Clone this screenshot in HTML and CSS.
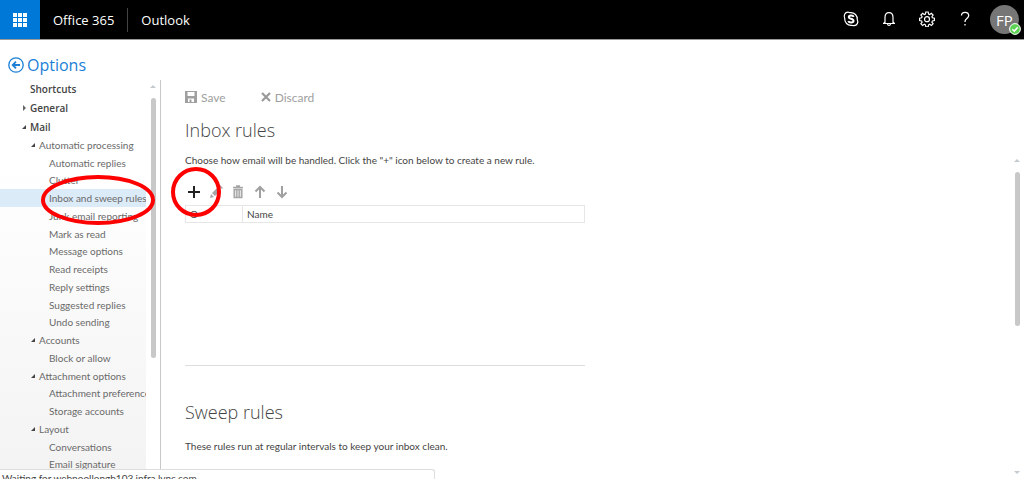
FILE: index.html
```html
<!DOCTYPE html>
<html lang="en">
<head>
    <meta charset="UTF-8">
    <meta name="viewport" content="width=device-width, initial-scale=1.0">
    <title>Outlook - Options</title>
    <link rel="stylesheet" href="styles.css">
</head>
<body>
    <header class="topbar">
        <button class="launcher" aria-label="App launcher">
            <svg width="14" height="14" viewBox="0 0 14 14" fill="#fff">
                <path d="M0 0h4v4H0zM5 0h4v4H5zM10 0h4v4h-4zM0 5h4v4H0zM5 5h4v4H5zM10 5h4v4h-4zM0 10h4v4H0zM5 10h4v4H5zM10 10h4v4h-4z"/>
            </svg>
        </button>
        <a class="brand" href="#">Office 365</a>
        <a class="app" href="#">Outlook</a>
        <nav class="tools">
            <button class="tool" aria-label="Skype">
                <svg width="16" height="16" viewBox="0 0 16 16" fill="none" stroke="#fff">
                    <path stroke-width="1.2" d="M5 1.2C6 1.2 6.500 1.700 7.200 1.700C11.500 1.300 14.600 4.600 14.300 8.700C15.600 11.200 14.200 14.700 11 14.700C10 14.700 9.500 14.300 8.700 14.300C4.500 14.700 1.400 11.400 1.700 7.300C.4 4.800 1.800 1.200 5 1.200z"/>
                    <path stroke-width="2" d="M10.700 5.800C10 4.100 5.800 4.100 5.800 6.200C5.800 8.200 10.500 7.300 10.500 9.700C10.500 12.100 6 12 5.300 10"/>
                </svg>
            </button>
            <button class="tool" aria-label="Notifications">
                <svg width="16" height="16" viewBox="0 0 16 16" fill="none" stroke="#fff" stroke-width="1.200">
                    <path d="M2 12.500h12M4 12V6.500C4 3.500 5.600 1.600 8 1.600s4 1.900 4 4.900V12M2.600 12.400L4 10.800M13.400 12.400L12 10.800"/>
                    <path d="M6.500 13c.3 1.800 2.700 1.800 3 0"/>
                </svg>
            </button>
            <button class="tool" aria-label="Settings">
                <svg width="16" height="16" viewBox="0 0 16 16" fill="none" stroke="#fff" stroke-width="1.200">
                    <path d="M6.800 1h2.400l.4 2 1.100.5 1.700-1.200 1.700 1.700-1.200 1.700.5 1.100 2 .4v2.400l-2 .4-.5 1.100 1.200 1.700-1.700 1.700-1.700-1.200-1.100.5-.4 2H6.800l-.4-2-1.100-.5-1.700 1.200L1.900 12.800l1.200-1.700-.5-1.100-2-.4V7.200l2-.4.5-1.100L1.900 4l1.700-1.700 1.700 1.200L6.400 3z"/>
                    <circle cx="8" cy="8.200" r="2.500"/>
                </svg>
            </button>
            <button class="tool" aria-label="Help">
                <svg width="16" height="16" viewBox="0 0 16 16" fill="none" stroke="#fff" stroke-width="1.300">
                    <path d="M4.500 4.500C4.500 .2 11.700 .2 11.700 4.500C11.700 7.500 8 7.500 8 10.500V11"/>
                    <path d="M8 13v1.600"/>
                </svg>
            </button>
            <button class="avatar">FP
                <svg class="presence" width="12" height="12" viewBox="0 0 12 12">
                    <circle cx="6" cy="6" r="5.400" fill="#5dd255" stroke="#fff"/>
                    <path d="M3.300 6.200l2 1.900 3.500-3.800" fill="none" stroke="#fff" stroke-width="1.500"/>
                </svg>
            </button>
        </nav>
    </header>

    <a class="options" href="#">
        <svg width="16" height="16" viewBox="0 0 16 16" fill="none" stroke="#1b7fd6">
            <circle cx="8" cy="8" r="7.200" stroke-width="1.300"/>
            <path stroke-width="1.800" d="M12 8H5M8 4.700L4.700 8L8 11.300"/>
        </svg>
        Options
    </a>

    <div class="page">
        <aside class="sidebar">
            <ul class="tree">
                <li class="top"><a href="#">Shortcuts</a></li>
                <li class="top closed"><a href="#">General</a></li>
                <li class="top open"><a href="#">Mail</a></li>
                <li class="group open"><a href="#">Automatic processing</a></li>
                <li><a href="#">Automatic replies</a></li>
                <li><a href="#">Clutter</a></li>
                <li class="selected"><a href="#">Inbox and sweep rules</a></li>
                <li><a href="#">Junk email reporting</a></li>
                <li><a href="#">Mark as read</a></li>
                <li><a href="#">Message options</a></li>
                <li><a href="#">Read receipts</a></li>
                <li><a href="#">Reply settings</a></li>
                <li><a href="#">Suggested replies</a></li>
                <li><a href="#">Undo sending</a></li>
                <li class="group open"><a href="#">Accounts</a></li>
                <li><a href="#">Block or allow</a></li>
                <li class="group open"><a href="#">Attachment options</a></li>
                <li><a href="#">Attachment preference</a></li>
                <li><a href="#">Storage accounts</a></li>
                <li class="group open"><a href="#">Layout</a></li>
                <li><a href="#">Conversations</a></li>
                <li><a href="#">Email signature</a></li>
            </ul>
            <div class="scroll">
                <span class="arrow-up"></span>
                <span class="thumb"></span>
            </div>
            <svg class="mark mark-menu" viewBox="0 0 116 52" fill="none" stroke="#f00" stroke-width="4">
                <ellipse cx="58" cy="26" rx="55" ry="23"/>
            </svg>
        </aside>

        <main class="content">
            <div class="actions">
                <button class="action">
                    <svg width="12" height="12" viewBox="0 0 12 12" fill="#a0a0a0">
                        <path fill-rule="evenodd" d="M0 0h12v12H0zM2.500 1v4h7V1zM3 7.500V11h1.500V8.500h2V11H9V7.500z"/>
                    </svg>
                    Save
                </button>
                <button class="action">
                    <svg width="10" height="10" viewBox="0 0 10 10" fill="none" stroke="#999" stroke-width="2.200">
                        <path d="M1 1l8 8M9 1L1 9"/>
                    </svg>
                    Discard
                </button>
            </div>

            <section class="rules">
                <h1>Inbox rules</h1>
                <p>Choose how email will be handled. Click the "+" icon below to create a new rule.</p>
                <div class="rule-tools">
                    <button aria-label="New rule">
                        <svg width="14" height="14" viewBox="0 0 14 14" stroke="#222" stroke-width="2"><path d="M7 1v12M1 7h12"/></svg>
                    </button>
                    <button aria-label="Edit">
                        <svg width="14" height="14" viewBox="0 0 14 14" fill="#a6a6a6"><path d="M1 13l1-4 3 3zM3 8l6-6 3 3-6 6zM10 1l1-1 3 3-1 1z"/></svg>
                    </button>
                    <button aria-label="Delete">
                        <svg width="14" height="14" viewBox="0 0 14 14" fill="none" stroke="#a6a6a6">
                            <path stroke-width="1.500" d="M2 2.500h10M5 1h4M3.200 4.500h7.600v8H3.200z"/>
                            <path stroke-width="1.200" d="M5.300 5v7M7 5v7M8.700 5v7"/>
                        </svg>
                    </button>
                    <button aria-label="Move up">
                        <svg width="14" height="14" viewBox="0 0 14 14" fill="none" stroke="#a0a0a0" stroke-width="2"><path d="M7 13V2M2.500 6.500L7 2l4.500 4.500"/></svg>
                    </button>
                    <button aria-label="Move down">
                        <svg width="14" height="14" viewBox="0 0 14 14" fill="none" stroke="#a0a0a0" stroke-width="2"><path d="M7 1v11M2.500 7.500L7 12l4.500-4.500"/></svg>
                    </button>
                    <svg class="mark mark-add" viewBox="0 0 52 52" fill="none" stroke="#f00" stroke-width="4">
                        <circle cx="26" cy="26" r="23"/>
                    </svg>
                </div>
                <table class="rule-list">
                    <thead>
                        <tr><th class="col-on">O</th><th>Name</th></tr>
                    </thead>
                </table>
            </section>

            <section class="sweep">
                <h1>Sweep rules</h1>
                <p>These rules run at regular intervals to keep your inbox clean.</p>
            </section>
        </main>

        <div class="scroll page-scroll">
            <span class="arrow-up"></span>
            <span class="thumb"></span>
            <span class="arrow-down"></span>
        </div>
    </div>

    <div class="status">Waiting for webpoollongb103.infra.lync.com</div>
</body>
</html>
```

FILE: styles.css
```css
* {
    box-sizing: border-box;
}
body {
    margin: 0;
    height: 100vh;
    display: flex;
    flex-direction: column;
    overflow: hidden;
    font-family: Lato, "Open Sans", sans-serif;
    font-size: 10px;
    color: #444;
    background-color: #fff;
}
a {
    color: inherit;
    text-decoration: none;
}
button {
    border: none;
    padding: 0;
    background: none;
    font-family: inherit;
    color: inherit;
}
svg {
    display: block;
}
h1, p, ul {
    margin: 0;
    padding: 0;
}
.topbar, .options, h1 {
    font-family: "Open Sans", sans-serif;
}

/* top bar */
.topbar {
    flex: none;
    display: flex;
    align-items: center;
    height: 40px;
    background-color: #000;
    border-bottom: 1px solid #999;
    color: #fff;
    font-size: 13px;
}
.launcher {
    display: flex;
    align-items: center;
    justify-content: center;
    width: 40px;
    height: 39px;
    background-color: #0078d7;
}
.brand {
    padding: 0 13px;
    line-height: 24px;
    border-right: 1px solid #444;
}
.app {
    padding-left: 13px;
}
.tools {
    display: flex;
    align-items: center;
    gap: 22px;
    margin-left: auto;
    padding-right: 5px;
}
.tool {
    padding-bottom: 2px;
}
.avatar {
    position: relative;
    width: 29px;
    height: 29px;
    margin-left: -5px;
    border-radius: 50%;
    background-color: #767676;
    color: #fff;
    font-size: 15px;
}
.presence {
    position: absolute;
    right: -2px;
    bottom: -1px;
}

.options {
    flex: none;
    display: flex;
    align-items: center;
    gap: 3px;
    height: 40px;
    padding: 10px 8px 0;
    font-size: 16px;
    color: #1b7fd6;
}

/* left menu */
.page {
    flex: 1;
    display: flex;
    min-height: 0;
}
.sidebar {
    position: relative;
    display: flex;
    width: 161px;
    border-right: 1px solid #c8c8c8;
}
.tree {
    display: flex;
    flex-direction: column;
    width: 146px;
    padding-bottom: 6px;
    list-style: none;
    overflow: hidden;
    white-space: nowrap;
    background: linear-gradient(#fff 20%, #f3f3f3);
}
.tree li {
    flex: 20;
    display: flex;
    align-items: center;
    min-height: 0;
    padding-left: 49px;
    line-height: 16px;
    color: #6a6a6a;
}
.tree .top {
    flex: 21;
    padding-left: 30px;
    font-family: "Open Sans", sans-serif;
    font-weight: 600;
    color: #444;
}
.tree .group {
    padding-left: 39px;
}
.tree .selected {
    background-color: #dcebf8;
}
.open::before {
    content: "";
    margin-left: -8px;
    margin-right: 4px;
    border-left: 4px solid transparent;
    border-bottom: 4px solid #444;
}
.closed::before {
    content: "";
    margin-left: -7px;
    margin-right: 4px;
    border-left: 3px solid #666;
    border-top: 3px solid transparent;
    border-bottom: 3px solid transparent;
}

/* scroll bars */
.scroll {
    display: flex;
    flex-direction: column;
    align-items: center;
    width: 14px;
    padding-top: 5px;
}
.arrow-up {
    border: 3px solid transparent;
    border-top: none;
    border-bottom: 3px solid #c3cbd0;
}
.arrow-down {
    margin-top: auto;
    border: 3px solid transparent;
    border-bottom: none;
    border-top: 3px solid #c3cbd0;
}
.thumb {
    width: 5px;
    height: 66%;
    margin-top: 10px;
    border-radius: 3px;
    background-color: #c8c8c8;
}
.page-scroll {
    padding: 79px 0 5px;
}
.page-scroll .thumb {
    height: 154px;
}

/* content */
.content {
    flex: 1;
    padding: 8px 24px 0;
}
.actions {
    display: flex;
    gap: 35px;
}
.action {
    display: flex;
    align-items: center;
    gap: 4px;
    height: 18px;
    font-size: 12px;
    color: #a0a0a0;
}
h1 {
    font-size: 18px;
    font-weight: 300;
    line-height: 24px;
    color: #444;
}
p {
    line-height: 16px;
}
.rules {
    max-width: 400px;
    height: 260px;
    padding-top: 12px;
    border-bottom: 1px solid #ddd;
}
.rules p {
    margin-top: 10px;
}
.rule-tools {
    position: relative;
    display: flex;
    gap: 8px;
    padding: 17px 2px 6px;
}
.rule-list {
    width: 100%;
    border-collapse: collapse;
    table-layout: fixed;
}
.rule-list th {
    height: 17px;
    padding: 0 4px;
    border: 1px solid #e6e6e6;
    line-height: 14px;
    font-weight: normal;
    text-align: left;
}
.rule-list .col-on {
    width: 57px;
}
.sweep {
    padding-top: 34px;
}
.sweep p {
    margin-top: 14px;
}

/* red rings over the menu entry and the add button */
.mark {
    position: absolute;
    pointer-events: none;
}
.mark-menu {
    left: 40px;
    top: 94px;
    width: 116px;
}
.mark-add {
    left: -15px;
    top: -2px;
    width: 52px;
}

.status {
    position: fixed;
    left: 0;
    bottom: 0;
    width: 435px;
    height: 10px;
    padding-left: 2px;
    overflow: hidden;
    border: 1px solid #ddd;
    border-width: 1px 1px 0 0;
    border-top-right-radius: 3px;
    background-color: #fff;
    line-height: 17px;
}
```
